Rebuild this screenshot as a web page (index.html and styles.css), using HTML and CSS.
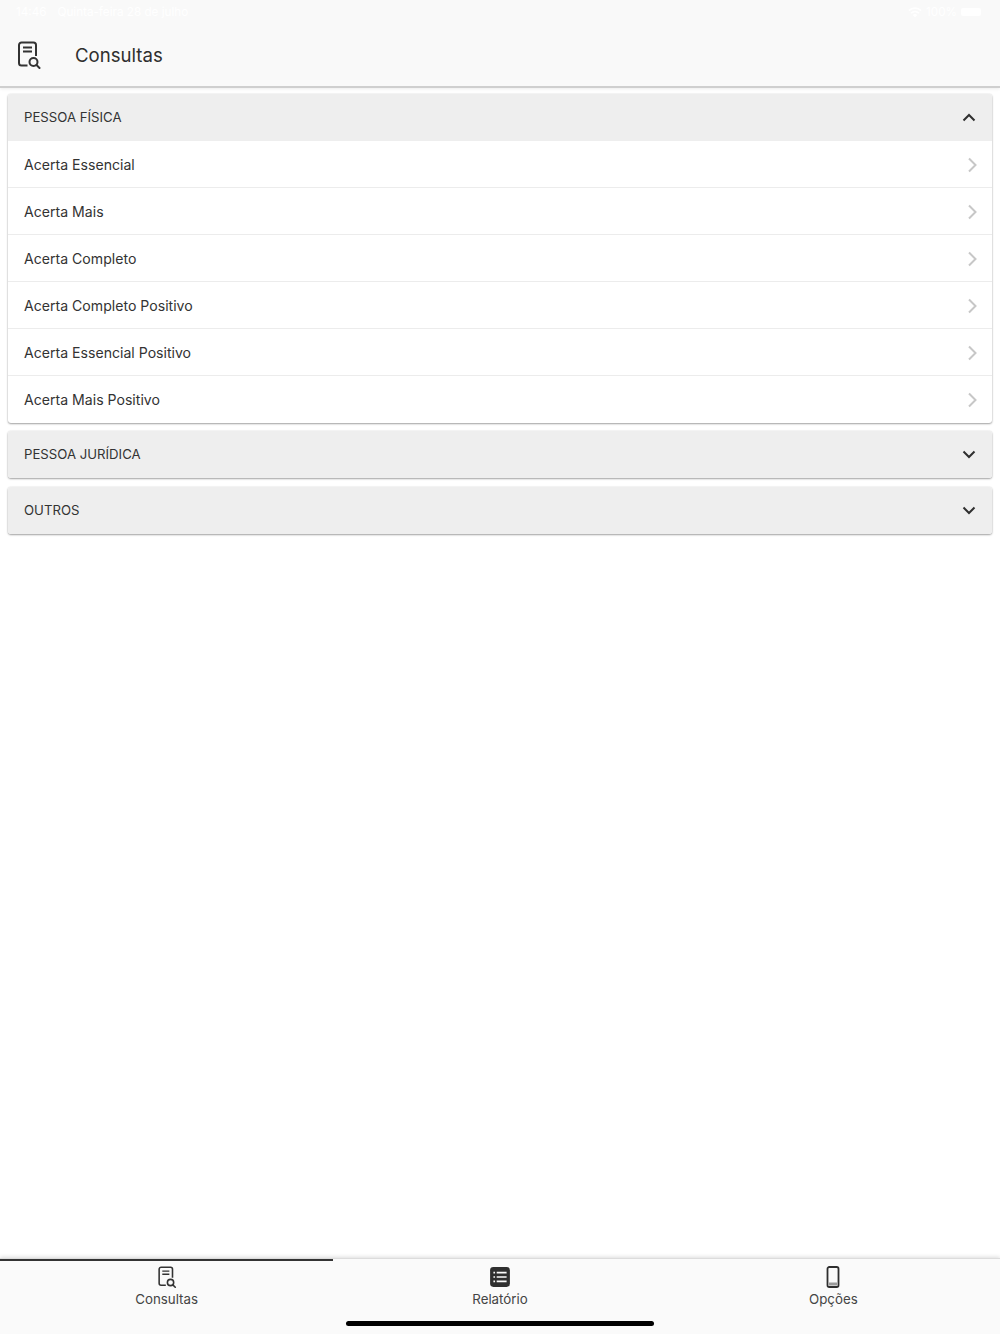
FILE: index.html
```html
<!DOCTYPE html>
<html lang="pt-BR">
<head>
    <meta charset="UTF-8">
    <meta name="viewport" content="width=device-width, initial-scale=1.0">
    <title>Consultas</title>
    <link rel="stylesheet" href="styles.css">
</head>
<body>
    <svg class="icon-defs" width="0" height="0">
        <defs>
            <symbol id="doc-search" viewBox="0 0 24 28">
                <path d="M10.500 24.500H4.500A2.500 2.500 0 0 1 2 22V4a2.500 2.500 0 0 1 2.500-2.500h12A2.500 2.500 0 0 1 19 4v11" fill="none" stroke="currentColor" stroke-width="2"/>
                <path d="M6 6.500h9M6 10.500h9" fill="none" stroke="currentColor" stroke-width="1.800"/>
                <circle cx="16.500" cy="21" r="4" fill="none" stroke="currentColor" stroke-width="2"/>
                <path d="M19.500 24l3 3" fill="none" stroke="currentColor" stroke-width="2" stroke-linecap="round"/>
            </symbol>
            <symbol id="chev-right" viewBox="0 0 10 16">
                <path d="M2 1.500L8.500 8L2 14.500" fill="none" stroke="#c7c7c7" stroke-width="2"/>
            </symbol>
            <symbol id="chev-down" viewBox="0 0 14 9">
                <path d="M1.500 1.500L7 7L12.500 1.500" fill="none" stroke="#2f2f2f" stroke-width="2"/>
            </symbol>
            <symbol id="chev-up" viewBox="0 0 14 9">
                <path d="M1.500 7.500L7 2L12.500 7.500" fill="none" stroke="#2f2f2f" stroke-width="2"/>
            </symbol>
        </defs>
    </svg>

    <header class="app-header">
        <div class="status-bar">
            <span class="status-time">14:46</span>
            <span class="status-date">Quinta-feira 28 de julho</span>
            <span class="status-right">
                <svg class="wifi" viewBox="0 0 14 11" width="14" height="11">
                    <path d="M7 10.500L4.800 8a3.200 3.200 0 0 1 4.400 0zM3.700 6.800L2.500 5.500a6.500 6.500 0 0 1 9 0L10.300 6.800a4.800 4.800 0 0 0-6.600 0zM1.400 4.300L0.300 3a9.800 9.800 0 0 1 13.400 0L12.600 4.300a8.200 8.200 0 0 0-11.200 0z" fill="#fff"/>
                </svg>
                <span>100%</span>
                <span class="battery"></span>
            </span>
        </div>
        <div class="toolbar">
            <svg class="toolbar-icon"><use href="#doc-search"/></svg>
            <h1 class="toolbar-title">Consultas</h1>
        </div>
    </header>

    <main class="content">
        <section class="panel">
            <div class="panel-head">
                <span>PESSOA FÍSICA</span>
                <svg class="chev"><use href="#chev-up"/></svg>
            </div>
            <div class="row"><span>Acerta Essencial</span><svg class="row-arrow"><use href="#chev-right"/></svg></div>
            <div class="row"><span>Acerta Mais</span><svg class="row-arrow"><use href="#chev-right"/></svg></div>
            <div class="row"><span>Acerta Completo</span><svg class="row-arrow"><use href="#chev-right"/></svg></div>
            <div class="row"><span>Acerta Completo Positivo</span><svg class="row-arrow"><use href="#chev-right"/></svg></div>
            <div class="row"><span>Acerta Essencial Positivo</span><svg class="row-arrow"><use href="#chev-right"/></svg></div>
            <div class="row"><span>Acerta Mais Positivo</span><svg class="row-arrow"><use href="#chev-right"/></svg></div>
        </section>
        <section class="panel">
            <div class="panel-head">
                <span>PESSOA JURÍDICA</span>
                <svg class="chev"><use href="#chev-down"/></svg>
            </div>
        </section>
        <section class="panel panel-last">
            <div class="panel-head">
                <span>OUTROS</span>
                <svg class="chev"><use href="#chev-down"/></svg>
            </div>
        </section>
    </main>

    <footer class="tabbar">
        <div class="tab tab-active">
            <svg class="tab-icon tab-icon-doc"><use href="#doc-search"/></svg>
            <span>Consultas</span>
        </div>
        <div class="tab">
            <svg class="tab-icon" viewBox="0 0 20 20">
                <rect x="1" y="1" width="18" height="18" rx="3" fill="#2f2f2f"/>
                <path d="M7 6h9M7 10h9M7 14h9M4 6h1.500M4 10h1.500M4 14h1.500" stroke="#fafafa" stroke-width="1.500" fill="none"/>
            </svg>
            <span>Relatório</span>
        </div>
        <div class="tab">
            <svg class="tab-icon" viewBox="0 0 20 22">
                <rect x="4.500" y="1" width="11" height="20" rx="1.800" fill="none" stroke="#2f2f2f" stroke-width="1.800"/>
                <rect x="6" y="16.500" width="8" height="3" fill="#9a9a9a"/>
            </svg>
            <span>Opções</span>
        </div>
        <div class="home-bar"></div>
    </footer>
</body>
</html>
```

FILE: styles.css
```css
html, body {
    margin: 0;
    height: 100%;
}
body {
    font-family: Inter, Roboto, sans-serif;
    color: #333;
    background-color: #fff;
    display: flex;
    flex-direction: column;
    height: 1334px;
    overflow: hidden;
}
.icon-defs {
    position: absolute;
}
.app-header {
    height: 86px;
    background-color: #f9f9f9;
    border-bottom: 2px solid #cfcfcf;
    box-shadow: 0 1px 3px rgba(0, 0, 0, 0.08);
}
.status-bar {
    height: 24px;
    padding: 0 19px 0 16px;
    display: flex;
    align-items: center;
    font-size: 11.700px;
    color: #fff;
}
.status-date {
    margin-left: 11px;
}
.status-right {
    margin-left: auto;
    display: flex;
    align-items: center;
    gap: 4px;
}
.battery {
    width: 20px;
    height: 8px;
    background-color: #fff;
    border-radius: 2px;
}
.toolbar {
    height: 62px;
    display: flex;
    align-items: center;
    padding-left: 17px;
}
.toolbar-icon {
    width: 24px;
    height: 28px;
    color: #333;
}
.toolbar-title {
    margin: 0 0 0 34px;
    font-size: 18.600px;
    font-weight: 400;
    color: #2f2f2f;
}
.content {
    flex: 1;
    padding: 6px 8px;
    display: flex;
    flex-direction: column;
    gap: 8px;
}
.panel {
    border-radius: 3px;
    overflow: hidden;
    background-color: #fff;
    box-shadow: 0 1px 2px rgba(0, 0, 0, 0.35), 0 0 2px rgba(0, 0, 0, 0.12);
}
.panel-last {
    margin-top: 1px;
}
.panel-head {
    box-sizing: border-box;
    height: 47px;
    background-color: #eeeeee;
    display: flex;
    align-items: center;
    justify-content: space-between;
    padding: 0 16px 2px;
    font-size: 13.200px;
}
.chev {
    width: 14px;
    height: 9px;
    margin-top: 2px;
}
.row {
    box-sizing: border-box;
    height: 47px;
    display: flex;
    align-items: center;
    justify-content: space-between;
    padding: 1px 15px 0 16px;
    font-size: 14.100px;
    border-bottom: 1px solid #ececec;
}
.row:last-child {
    border-bottom: none;
    padding-top: 0;
}
.row-arrow {
    width: 10px;
    height: 16px;
}
.tabbar {
    position: relative;
    height: 75px;
    background-color: #fafafa;
    border-top: 1px solid #dcdcdc;
    box-shadow: 0 -1px 4px rgba(0, 0, 0, 0.14);
    display: grid;
    grid-template-columns: repeat(3, 1fr);
}
.tab {
    display: flex;
    flex-direction: column;
    align-items: center;
    padding-top: 5px;
    font-size: 13.300px;
    color: #444;
    border-top: 2px solid transparent;
}
.tab-active {
    border-top-color: #333;
}
.tab-icon {
    width: 22px;
    height: 22px;
    margin-bottom: 3px;
    flex: none;
}
.tab-icon-doc {
    color: #333;
}
.home-bar {
    position: absolute;
    left: 346px;
    bottom: 8px;
    width: 308px;
    height: 5px;
    border-radius: 3px;
    background-color: #000;
}
```
